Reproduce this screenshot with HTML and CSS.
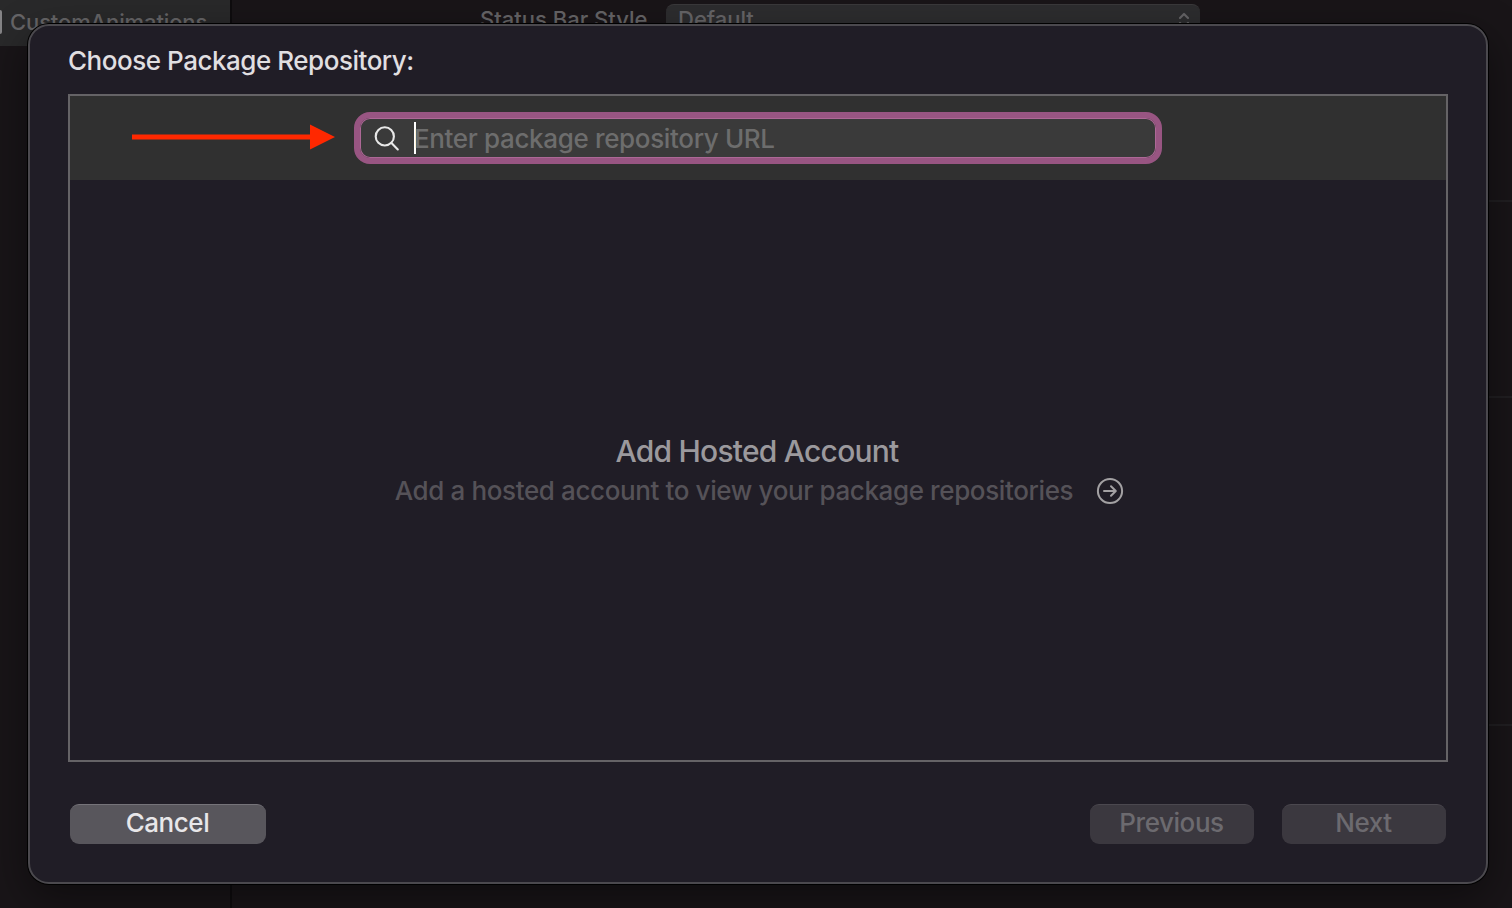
FILE: index.html
```html
<!DOCTYPE html>
<html lang="en">
<head>
<meta charset="utf-8">
<title>Choose Package Repository</title>
<link rel="stylesheet" href="styles.css">
</head>
<body>
<div class="window">
  <aside class="sidebar">
    <div class="sidebar-item"><span class="item-icon"></span><span class="item-label">CustomAnimations</span></div>
  </aside>
  <main class="editor">
    <section class="settings-row">
      <span class="setting-label">Status Bar Style</span>
      <div class="select"><span class="select-value">Default</span>
        <svg class="select-icon" width="12" height="18" viewBox="0 0 12 18"><path d="M2 6 L6 2 L10 6 M2 11 L6 15 L10 11"/></svg>
      </div>
    </section>
    <section class="section-a"></section>
    <section class="section-b"></section>
  </main>
</div>
<div class="dialog">
  <h1 class="title"><span>Choose Package Repository:</span></h1>
  <div class="panel">
    <div class="toolbar">
      <svg class="arrow" width="203" height="26" viewBox="0 0 203 26"><path d="M0 10.5H178V.5L203 13L178 25.5V15.5H0Z"/></svg>
      <div class="search">
        <svg class="search-icon" width="28" height="28" viewBox="0 0 28 28"><circle cx="11.8" cy="12.4" r="9.1"/><path d="M18.5 19.1L24.8 25.4"/></svg>
        <span class="caret"></span><span class="placeholder">Enter package repository URL</span>
      </div>
    </div>
    <div class="empty">
      <h2 class="empty-title"><span>Add Hosted Account</span></h2>
      <div class="empty-line">
        <span class="empty-text">Add a hosted account to view your package repositories</span>
        <svg class="go-icon" width="28" height="28" viewBox="0 0 28 28"><circle cx="14" cy="14" r="12.1"/><path d="M8 14H19.6M15 9.2L19.8 14L15 18.8"/></svg>
      </div>
    </div>
  </div>
  <div class="actions">
    <button class="button cancel"><span>Cancel</span></button>
    <button class="button disabled previous"><span>Previous</span></button>
    <button class="button disabled"><span>Next</span></button>
  </div>
</div>
</body>
</html>
```
FILE: styles.css
```css
* { box-sizing: border-box; }
html, body { margin: 0; height: 100%; overflow: hidden; }
body { position: relative; background: #191518; font-family: Inter, "Liberation Sans", sans-serif; font-size: 26px; font-weight: 450; }
h1, h2 { margin: 0; font-weight: 450; }
svg { display: block; flex: none; fill: none; stroke-linecap: round; stroke-linejoin: round; }
span { white-space: nowrap; }

.window { display: flex; width: 1512px; height: 908px; overflow: hidden; color: #666567; }
.sidebar { width: 232px; border-right: 2px solid #0e0c0e; }
.sidebar-item { display: flex; align-items: center; height: 46px; padding-bottom: 3px; background: #29292a; font-size: 22px; }
.item-icon { width: 2px; height: 24px; background: #858486; border-radius: 0 3px 3px 0; margin-right: 8px; }
.item-label { letter-spacing: -.12px; }
.editor { flex: 1; display: flex; flex-direction: column; }
.editor section { flex: none; border-bottom: 2px solid #211f22; }
.settings-row { display: flex; height: 202px; padding: 4px 0 0 248px; font-size: 22px; line-height: 31px; }
.setting-label { width: 186px; }
.select { display: flex; justify-content: space-between; width: 534px; height: 36px; padding: 0 10px 0 12px; border-radius: 8px; background: #2d2d2f; border-top: 1px solid #3a393b; line-height: 29px; }
.select-icon { stroke: #666567; stroke-width: 2.2; margin-top: 7px; }
.section-a { height: 196px; }
.section-b { height: 328px; }

.dialog { position: absolute; left: 28px; top: 24px; width: 1460px; height: 860px; display: flex; flex-direction: column; padding: 0 38px; border: 2px solid #4b494e; border-radius: 21px; background: #201d26; box-shadow: 0 0 0 1px #000, 0 14px 44px rgba(0, 0, 0, .45); }
.title { height: 68px; padding-top: 17px; font-size: 26px; line-height: 36px; letter-spacing: -.47px; color: #e0dfe1; }
.panel { display: flex; flex-direction: column; height: 668px; border: 2px solid #656366; }
.toolbar { display: flex; align-items: center; height: 84px; padding-left: 62px; background: #303030; }
.arrow { fill: #ff2800; margin-top: -2px; }
.search { display: flex; align-items: center; width: 808px; height: 52px; margin-left: 19px; padding-left: 13px; border: 6px solid #985582; border-radius: 16px; background: #3a3a3a; box-shadow: inset 0 0 0 1px #ad6896; }
.search-icon { stroke: #e8e8e8; stroke-width: 2.1; }
.caret { width: 2px; height: 32px; margin-left: 13px; background: #fff; }
.placeholder { margin-left: -2px; color: #6d6d6d; letter-spacing: -.35px; }
.empty { flex: 1; display: flex; flex-direction: column; align-items: center; padding-top: 252px; }
.empty-title { padding-right: 2px; font-size: 30px; line-height: 38px; letter-spacing: -.78px; color: #9b999d; }
.empty-line { display: flex; align-items: center; gap: 23px; height: 42px; padding-left: 3px; }
.empty-text { padding-bottom: 2px; color: #555258; letter-spacing: -.38px; }
.go-icon { stroke: #a3a1a3; stroke-width: 2; }
.actions { display: flex; margin-top: 42px; padding: 0 2px; }
.button { width: 164px; height: 40px; padding: 0 1px 3px 0; border: 0; border-top: 1px solid #757379; border-radius: 9px; background: #58565c; color: #e8e7e9; font: 450 26px/36px Inter, "Liberation Sans", sans-serif; letter-spacing: -.45px; }
.cancel { width: 196px; }
.disabled { background: #3b383f; border-top-color: #4b484f; color: #6c6a6f; }
.previous { margin-left: auto; margin-right: 28px; }
```
